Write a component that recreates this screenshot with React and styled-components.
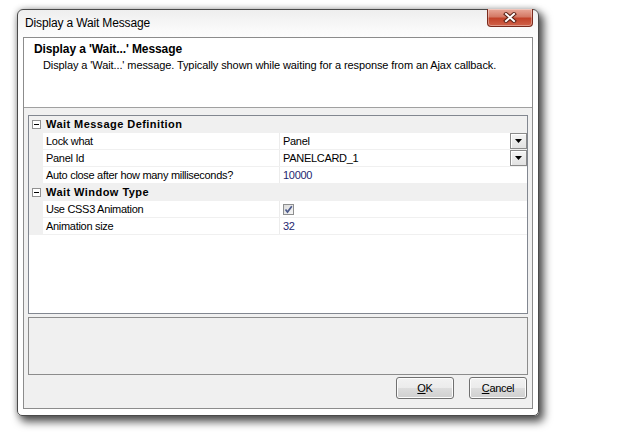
import React from "react";
import styled, { createGlobalStyle } from "styled-components";

const GlobalStyle = createGlobalStyle`
  html, body { margin: 0; padding: 0; background: #ffffff; }
  body { font-family: "Liberation Sans", Arial, sans-serif; color: #000; }
  * { box-sizing: border-box; }
`;

const Desktop = styled.div`
  width: 635px;
  height: 447px;
  padding: 9px 0 0 17px;
  overflow: hidden;
`;

const Window = styled.div`
  width: 522px;
  height: 407px;
  border: 1px solid #4a4a4a;
  border-radius: 6px 6px 5px 5px;
  background: linear-gradient(to bottom, #eeeeee 0px, #fafafa 20px, #ffffff 40px);
  box-shadow: 4px 5px 9px 1px rgba(0, 0, 0, 0.65), 0 0 6px rgba(0, 0, 0, 0.25);
  display: flex;
  flex-direction: column;
  padding: 0 5px 6px 5px;
`;

const TitleBar = styled.div`
  height: 27px;
  display: flex;
  align-items: flex-start;
  margin: 0 -5px;
  padding-left: 7px;
`;

const TitleText = styled.div`
  flex: 1;
  font-size: 12px;
  letter-spacing: -0.15px;
  line-height: 14px;
  padding-top: 6px;
  color: #000;
`;

const CloseButton = styled.div`
  width: 46px;
  height: 18px;
  margin-right: 5px;
  margin-top: -1px;
  border: 1px solid #7a2a1c;
  border-top: none;
  border-radius: 0 0 4px 4px;
  background: linear-gradient(to bottom, #e9a99a 0%, #d47a66 45%, #c2432a 55%, #d0634a 100%);
  box-shadow: inset 0 0 0 1px rgba(255, 255, 255, 0.35);
  display: flex;
  align-items: center;
  justify-content: center;
`;

const Client = styled.div`
  flex: 1;
  border: 1px solid #8c8c8c;
  background: #f0f0f0;
  display: flex;
  flex-direction: column;
`;

const Header = styled.div`
  height: 70px;
  background: #ffffff;
  border-bottom: 1px solid #a0a0a0;
  padding: 4px 0 0 10px;
`;

const HeaderTitle = styled.div`
  font-size: 12px;
  font-weight: bold;
  letter-spacing: -0.1px;
  line-height: 15px;
`;

const HeaderDesc = styled.div`
  font-size: 11px;
  letter-spacing: -0.1px;
  line-height: 15px;
  padding-left: 9px;
  margin-top: 1px;
`;

const Body = styled.div`
  flex: 1;
  display: flex;
  flex-direction: column;
  padding: 7px 4px 9px 4px;
`;

const Grid = styled.div`
  height: 199px;
  border: 1px solid #828790;
  background: #ffffff;
  display: flex;
  flex-direction: column;
`;

const CategoryRow = styled.div`
  height: 17px;
  background: #f0f0f0;
  display: flex;
  align-items: center;
`;

const Margin = styled.div`
  width: 14px;
  align-self: stretch;
  background: #f0f0f0;
  display: flex;
  align-items: center;
  justify-content: center;
`;

const CategoryLabel = styled.div`
  padding-left: 3px;
  font-size: 11px;
  font-weight: bold;
  letter-spacing: 0.45px;
  line-height: 17px;
`;

const PropRow = styled.div`
  height: 17px;
  display: flex;
  border-bottom: 1px solid #f0f0f0;
`;

const LabelCell = styled.div`
  width: 237px;
  border-right: 1px solid #ececec;
  padding-left: 3px;
  font-size: 11px;
  letter-spacing: -0.3px;
  line-height: 16px;
  white-space: nowrap;
`;

const ValueCell = styled.div`
  flex: 1;
  display: flex;
  align-items: center;
  padding-left: 3px;
  font-size: 11px;
  letter-spacing: -0.3px;
  line-height: 16px;
  color: ${(p) => (p.$modified ? "#1e2670" : "#000")};
`;

const ValueText = styled.span`
  flex: 1;
`;

const DropButton = styled.div`
  width: 17px;
  height: 16px;
  border: 1px solid #8a8a8a;
  background: linear-gradient(to bottom, #f4f4f4, #e2e2e2);
  box-shadow: inset 1px 1px 0 #ffffff;
  display: flex;
  align-items: center;
  justify-content: center;
`;

const CheckBox = styled.div`
  width: 11px;
  height: 11px;
  border: 1px solid #8e8f8f;
  background: linear-gradient(135deg, #dcdcdc, #f6f6f6);
  display: flex;
  align-items: center;
  justify-content: center;
`;

const MinusBox = styled.div`
  width: 9px;
  height: 9px;
  border: 1px solid #919191;
  background: #ffffff;
  display: flex;
  align-items: center;
  justify-content: center;
  &::after {
    content: "";
    width: 5px;
    height: 1px;
    background: #000;
  }
`;

const HelpPanel = styled.div`
  height: 58px;
  margin-top: 3px;
  border: 1px solid #8c8c8c;
  background: #f0f0f0;
`;

const ButtonRow = styled.div`
  margin-top: 2px;
  display: flex;
  justify-content: flex-end;
  gap: 15px;
  padding-right: 1px;
`;

const Button = styled.div`
  width: 58px;
  height: 22px;
  border: 1px solid #707070;
  border-radius: 3px;
  background: linear-gradient(to bottom, #f2f2f2 0%, #ebebeb 50%, #dddddd 51%, #cfcfcf 100%);
  box-shadow: inset 0 0 0 1px #fcfcfc;
  display: flex;
  align-items: center;
  justify-content: center;
  font-size: 11px;
  letter-spacing: -0.3px;
  color: #000;
  u { text-decoration: underline; text-underline-offset: 1px; }
`;

const CloseX = () => (
  <svg width="14" height="11" viewBox="0 0 14 11">
    <path d="M3 2 L11 9 M11 2 L3 9" stroke="#5b2216" strokeWidth="4" strokeLinecap="square" fill="none" />
    <path d="M3 2 L11 9 M11 2 L3 9" stroke="#ffffff" strokeWidth="2" strokeLinecap="square" fill="none" />
  </svg>
);

const DownArrow = () => (
  <svg width="7" height="4" viewBox="0 0 7 4">
    <path d="M0 0 H7 L3.5 4 Z" fill="#000" />
  </svg>
);

const Check = () => (
  <svg width="9" height="9" viewBox="0 0 9 9">
    <path d="M1.5 4.5 L3.5 7 L7.8 1.2" stroke="#4d5b8c" strokeWidth="1.7" fill="none" />
  </svg>
);

const Category = ({ label }) => (
  <CategoryRow>
    <Margin>
      <MinusBox />
    </Margin>
    <CategoryLabel>{label}</CategoryLabel>
  </CategoryRow>
);

const Prop = ({ label, value, dropdown, modified, checkbox }) => (
  <PropRow>
    <Margin />
    <LabelCell>{label}</LabelCell>
    <ValueCell $modified={modified}>
      {checkbox ? (
        <CheckBox>
          <Check />
        </CheckBox>
      ) : (
        <ValueText>{value}</ValueText>
      )}
      {dropdown && (
        <DropButton>
          <DownArrow />
        </DropButton>
      )}
    </ValueCell>
  </PropRow>
);

export default function App() {
  return (
    <>
      <GlobalStyle />
      <Desktop>
        <Window>
          <TitleBar>
            <TitleText>Display a Wait Message</TitleText>
            <CloseButton>
              <CloseX />
            </CloseButton>
          </TitleBar>
          <Client>
            <Header>
              <HeaderTitle>Display a 'Wait...' Message</HeaderTitle>
              <HeaderDesc>
                Display a 'Wait...' message. Typically shown while waiting for a response from an Ajax callback.
              </HeaderDesc>
            </Header>
            <Body>
              <Grid>
                <Category label="Wait Message Definition" />
                <Prop label="Lock what" value="Panel" dropdown />
                <Prop label="Panel Id" value="PANELCARD_1" dropdown />
                <Prop label="Auto close after how many milliseconds?" value="10000" modified />
                <Category label="Wait Window Type" />
                <Prop label="Use CSS3 Animation" checkbox />
                <Prop label="Animation size" value="32" modified />
              </Grid>
              <HelpPanel />
              <ButtonRow>
                <Button>
                  <span><u>O</u>K</span>
                </Button>
                <Button>
                  <span><u>C</u>ancel</span>
                </Button>
              </ButtonRow>
            </Body>
          </Client>
        </Window>
      </Desktop>
    </>
  );
}
